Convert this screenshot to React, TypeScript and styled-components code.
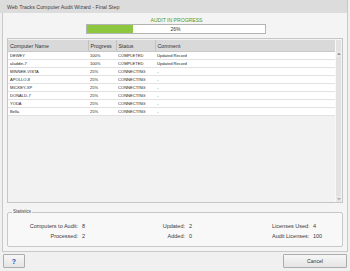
import React from "react";
import styled, { createGlobalStyle } from "styled-components";

const GlobalStyle = createGlobalStyle`
  html, body {
    margin: 0;
    padding: 0;
    background: #f0f0f0;
    font-family: "Liberation Sans", Arial, sans-serif;
  }
`;

type Row = {
  name: string;
  progress: string;
  status: string;
  comment: string;
};

const rows: Row[] = [
  { name: "DEWEY", progress: "100%", status: "COMPLETED", comment: "Updated Record" },
  { name: "aladdin-7", progress: "100%", status: "COMPLETED", comment: "Updated Record" },
  { name: "MINNEE-VISTA", progress: "25%", status: "CONNECTING", comment: "-" },
  { name: "APOLLO-8", progress: "25%", status: "CONNECTING", comment: "-" },
  { name: "MICKEY-XP", progress: "25%", status: "CONNECTING", comment: "-" },
  { name: "DONALD-7", progress: "25%", status: "CONNECTING", comment: "-" },
  { name: "YODA", progress: "25%", status: "CONNECTING", comment: "-" },
  { name: "Bella", progress: "25%", status: "CONNECTING", comment: "-" },
];

const progress = 26;

function App() {
  return (
    <Window>
      <GlobalStyle />
      <TitleBar>Web Tracks Computer Audit Wizard - Final Step</TitleBar>
      <Content>
        <ProgressArea>
          <ProgressLabel>AUDIT IN PROGRESS</ProgressLabel>
          <ProgressBar>
            <ProgressFill style={{ width: `${progress}%` }} />
            <ProgressText>{progress}%</ProgressText>
          </ProgressBar>
        </ProgressArea>

        <Panel>
          <TableWrap>
            <Table>
              <colgroup>
                <col style={{ width: 80 }} />
                <col style={{ width: 28 }} />
                <col style={{ width: 39 }} />
                <col />
              </colgroup>
              <thead>
                <tr>
                  <Th>Computer Name</Th>
                  <Th>Progress</Th>
                  <Th>Status</Th>
                  <Th $last>Comment</Th>
                </tr>
              </thead>
              <tbody>
                {rows.map((r) => (
                  <tr key={r.name}>
                    <Td>{r.name}</Td>
                    <Td>{r.progress}</Td>
                    <Td>{r.status}</Td>
                    <Td>{r.comment}</Td>
                  </tr>
                ))}
              </tbody>
            </Table>
          </TableWrap>
          <ScrollBar>
            <ScrollButton>
              <svg width="4" height="3" viewBox="0 0 4 3">
                <path d="M0 3 L2 0.5 L4 3 Z" fill="#9a9a9a" />
              </svg>
            </ScrollButton>
            <ScrollButton>
              <svg width="4" height="3" viewBox="0 0 4 3">
                <path d="M0 0 L2 2.5 L4 0 Z" fill="#b0b0b0" />
              </svg>
            </ScrollButton>
          </ScrollBar>
        </Panel>

        <Stats>
          <Legend>Statistics</Legend>
          <StatsGrid>
            <Label $align="right">Computers to Audit:</Label>
            <Value>8</Value>
            <Label $align="right">Updated:</Label>
            <Value>2</Value>
            <Label>Licenses Used:</Label>
            <Value>4</Value>
            <Label $align="right">Processed:</Label>
            <Value>2</Value>
            <Label $align="right">Added:</Label>
            <Value>0</Value>
            <Label>Audit Licenses:</Label>
            <Value>100</Value>
          </StatsGrid>
        </Stats>
      </Content>

      <ButtonBar>
        <Button $width={22}>
          <HelpMark>?</HelpMark>
        </Button>
        <Button $width={64}>Cancel</Button>
      </ButtonBar>
    </Window>
  );
}

export default App;

const Window = styled.div`
  width: 348px;
  height: 271px;
  display: flex;
  flex-direction: column;
  background: #f0f0f0;
  color: #3a3a3a;
`;

const TitleBar = styled.div`
  height: 13px;
  line-height: 14px;
  padding-left: 7px;
  background: #dcdcdc;
  border-right: 1px solid #c8c8c8;
  font-size: 5.3px;
  color: #404040;
  white-space: nowrap;
`;

const Content = styled.div`
  margin-left: 2px;
  height: 239px;
  box-sizing: border-box;
  display: flex;
  flex-direction: column;
  padding: 0 4px 4px 4px;
  background: #f4f4f4;
  border: 1px solid #c9c9c9;
  border-top: none;
`;

const ProgressArea = styled.div`
  height: 25px;
  display: flex;
  flex-direction: column;
  align-items: center;
  padding-left: 1px;
  padding-top: 4px;
  box-sizing: border-box;
`;

const ProgressLabel = styled.div`
  font-size: 5.1px;
  line-height: 7px;
  color: #4e9a2a;
  margin-left: 2px;
`;

const ProgressBar = styled.div`
  position: relative;
  width: 180px;
  height: 10px;
  box-sizing: border-box;
  border: 1px solid #b4b4b4;
  background: #ffffff;
`;

const ProgressFill = styled.div`
  height: 100%;
  background: #8dc63f;
`;

const ProgressText = styled.div`
  position: absolute;
  inset: 0;
  text-align: center;
  font-size: 5px;
  line-height: 8px;
  color: #333;
`;

const Panel = styled.div`
  height: 166px;
  box-sizing: border-box;
  display: flex;
  padding: 1px 0 0 0;
  border: 1px solid #c6c6c6;
  background: #f2f2f2;
`;

const TableWrap = styled.div`
  flex: 1;
`;

const Table = styled.table`
  width: 100%;
  border-collapse: collapse;
  table-layout: fixed;
`;

const Th = styled.th<{ $last?: boolean }>`
  height: 12px;
  padding: 0 0 0 2px;
  box-sizing: border-box;
  text-align: left;
  font-weight: normal;
  font-size: 5.3px;
  color: #333;
  background: #d9d9d9;
  border-right: ${(p) => (p.$last ? "none" : "1px solid #c2c2c2")};
  border-bottom: 1px solid #c8c8c8;
`;

const Td = styled.td`
  height: 8px;
  padding: 0 0 0 2px;
  box-sizing: border-box;
  font-size: 4.1px;
  line-height: 7px;
  color: #262626;
  background: #ffffff;
  border-bottom: 1px solid #e2e2e2;
  white-space: nowrap;
`;

const ScrollBar = styled.div`
  width: 5px;
  margin-right: 1px;
  display: flex;
  flex-direction: column;
  justify-content: space-between;
  padding-top: 11px;
  background: #e2e2e2;
  border-left: 1px solid #f8f8f8;
`;

const ScrollButton = styled.div`
  height: 6px;
  display: flex;
  align-items: center;
  justify-content: center;
  background: #e8e8e8;
`;

const Stats = styled.fieldset`
  margin: 6px 0 0 0;
  padding: 2px 0 0 0;
  height: 38px;
  box-sizing: border-box;
  border: 1px solid #c8c8c8;
  border-radius: 2px;
  background: #f8f8f8;
  min-width: 0;
`;

const Legend = styled.legend`
  margin-left: 4px;
  padding: 0 1px;
  font-size: 4.5px;
  line-height: 6px;
  color: #444;
`;

const StatsGrid = styled.div`
  display: grid;
  grid-template-columns: 74px 62px 45px 83px 41px 1fr;
  grid-auto-rows: 10px;
  padding-top: 4px;
  font-size: 5.5px;
  line-height: 10px;
  color: #3a3a3a;
`;

const Label = styled.div<{ $align?: "left" | "right" }>`
  text-align: ${(p) => p.$align || "left"};
  padding-right: ${(p) => (p.$align === "right" ? "4px" : "0")};
  white-space: nowrap;
`;

const Value = styled.div`
  white-space: nowrap;
`;

const ButtonBar = styled.div`
  display: flex;
  justify-content: space-between;
  align-items: flex-start;
  padding: 2px 1px 0 3px;
`;

const Button = styled.div<{ $width: number }>`
  width: ${(p) => p.$width}px;
  height: 14px;
  box-sizing: border-box;
  display: flex;
  align-items: center;
  justify-content: center;
  border: 1px solid #acacac;
  border-radius: 1px;
  background: linear-gradient(#f7f7f7, #e4e4e4);
  font-size: 5.1px;
  color: #333;
`;

const HelpMark = styled.span`
  font-size: 7px;
  font-weight: bold;
  color: #1a4bb8;
`;
